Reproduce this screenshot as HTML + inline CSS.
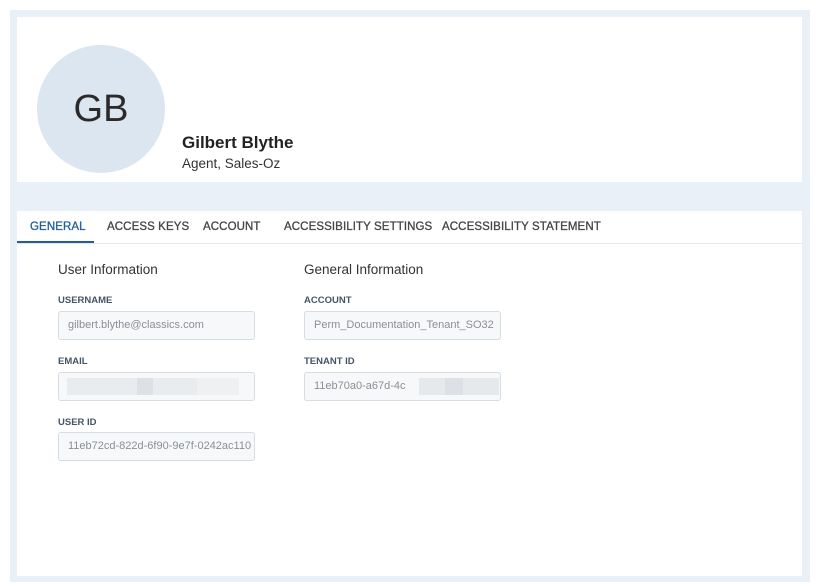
<!DOCTYPE html>
<html><head><meta charset="utf-8"><style>
*{box-sizing:border-box;margin:0;padding:0}
body{width:820px;height:586px;background:#fff;font-family:"Liberation Sans",sans-serif;position:relative;overflow:hidden}
.frame{position:absolute;left:10px;top:10px;width:800px;height:572px;background:#e9f0f7}
.card{position:absolute;background:#fff}
.circle{position:absolute;left:37px;top:45px;width:128px;height:128px;border-radius:50%;background:#dce6f0;color:#2a2a2a;font-size:38px;text-align:center;line-height:128px}
.name{position:absolute;left:182px;top:133px;font-size:17px;font-weight:bold;color:#222}
.sub{position:absolute;left:182px;top:156px;font-size:13.5px;color:#333}
.tabs{position:absolute;left:17px;top:211px;width:785px;height:33px;border-bottom:1px solid #e4e8ec}
.tab{position:absolute;top:0;height:33px;line-height:32px;font-size:11.5px;color:#444;letter-spacing:0.1px;-webkit-text-stroke:0.3px #444}
.tab.active{color:#1f5f9f;-webkit-text-stroke:0.3px #1f5f9f}
.ul{position:absolute;left:17px;top:241px;width:77px;height:2px;background:#1f5f9f}
.h{position:absolute;font-size:13.5px;color:#333}
.lbl{position:absolute;font-size:9.5px;font-weight:bold;color:#445566}
.inp{position:absolute;width:197px;height:29px;border:1px solid #d8dde2;border-radius:3px;background:#f7f8f9;font-size:11px;color:#8a8f96;line-height:27px;padding-left:9px;white-space:nowrap;overflow:hidden}
.blur{position:absolute;top:5px;height:17px}
</style></head><body>
<div class="frame"></div>
<div class="card" style="left:17px;top:17px;width:785px;height:165px"></div>
<div class="card" style="left:17px;top:211px;width:785px;height:365px"></div>
<div class="circle">GB</div>
<div class="name">Gilbert Blythe</div>
<div class="sub">Agent, Sales-Oz</div>
<div class="tabs">
<div class="tab active" style="left:13px">GENERAL</div>
<div class="tab" style="left:90px">ACCESS KEYS</div>
<div class="tab" style="left:186px">ACCOUNT</div>
<div class="tab" style="left:267px">ACCESSIBILITY SETTINGS</div>
<div class="tab" style="left:425px">ACCESSIBILITY STATEMENT</div>
</div>
<div class="ul"></div>
<div class="h" style="left:58px;top:262px">User Information</div>
<div class="h" style="left:304px;top:262px">General Information</div>
<div class="lbl" style="left:58px;top:295px">USERNAME</div>
<div class="inp" style="left:58px;top:311px">gilbert.blythe@classics.com</div>
<div class="lbl" style="left:58px;top:356px">EMAIL</div>
<div class="inp" style="left:58px;top:372px">
<div class="blur" style="left:8px;width:130px;background:#e9ecef"></div>
<div class="blur" style="left:78px;width:16px;background:#dde1e5"></div>
<div class="blur" style="left:138px;width:42px;background:#eef0f2"></div>
</div>
<div class="lbl" style="left:58px;top:417px">USER ID</div>
<div class="inp" style="left:58px;top:432px">11eb72cd-822d-6f90-9e7f-0242ac110</div>
<div class="lbl" style="left:304px;top:295px">ACCOUNT</div>
<div class="inp" style="left:304px;top:311px">Perm_Documentation_Tenant_SO32</div>
<div class="lbl" style="left:304px;top:356px">TENANT ID</div>
<div class="inp" style="left:304px;top:372px">11eb70a0-a67d-4c
<div class="blur" style="left:114px;width:80px;background:#e6e9ec"></div>
<div class="blur" style="left:140px;width:18px;background:#dde1e5"></div>
</div>
</body></html>
